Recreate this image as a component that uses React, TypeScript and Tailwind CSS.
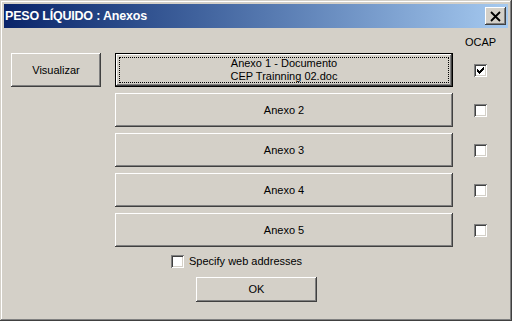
import React from 'react';

const raised =
  'bg-[#d4d0c8] shadow-[inset_-1px_-1px_#404040,inset_1px_1px_#ffffff,inset_-2px_-2px_#808080,inset_2px_2px_#d4d0c8]';
const sunken =
  'bg-white shadow-[inset_1px_1px_#808080,inset_-1px_-1px_#ffffff,inset_2px_2px_#404040,inset_-2px_-2px_#d4d0c8]';

const CheckBox = ({ checked = false }: { checked?: boolean }) => (
  <div className={`relative w-[13px] h-[13px] shrink-0 ${sunken}`}>
    {checked && (
      <svg width="13" height="13" viewBox="0 0 13 13" className="absolute inset-0" shapeRendering="crispEdges">
        <rect x="9" y="3" width="1" height="1" fill="#000" />
        <rect x="8" y="4" width="2" height="1" fill="#000" />
        <rect x="3" y="5" width="1" height="1" fill="#000" />
        <rect x="7" y="5" width="3" height="1" fill="#000" />
        <rect x="3" y="6" width="2" height="1" fill="#000" />
        <rect x="6" y="6" width="3" height="1" fill="#000" />
        <rect x="3" y="7" width="5" height="1" fill="#000" />
        <rect x="4" y="8" width="3" height="1" fill="#000" />
        <rect x="5" y="9" width="1" height="1" fill="#000" />
      </svg>
    )}
  </div>
);

const annexes = ['Anexo 2', 'Anexo 3', 'Anexo 4', 'Anexo 5'];

export default function App() {
  return (
    <div
      className="w-[512px] h-[321px] flex flex-col p-[4px] bg-[#d4d0c8] shadow-[inset_-1px_-1px_#404040,inset_1px_1px_#d4d0c8,inset_-2px_-2px_#808080,inset_2px_2px_#ffffff] text-black text-[11px] leading-[13px]"
      style={{ fontFamily: '"Liberation Sans", Arial, sans-serif' }}
    >
      {/* Title bar */}
      <div className="h-[24px] flex items-center justify-between pl-[1px] pr-[2px] bg-gradient-to-r from-[#0a246a] to-[#a6caf0]">
        <span className="text-white font-bold text-[12.5px] tracking-[-0.2px]">PESO LÍQUIDO : Anexos</span>
        <div className={`w-[21px] h-[18px] flex items-center justify-center ${raised}`}>
          <svg width="11" height="11" viewBox="0 0 11 11">
            <path d="M1 1 L10 10 M10 1 L1 10" stroke="#000" strokeWidth="1.8" />
          </svg>
        </div>
      </div>

      {/* Body */}
      <div className="flex flex-col pt-[8px] pl-[7px]">
        <div className="flex h-[13px]">
          <div className="ml-[463px] w-[13px] flex justify-center">
            <span className="whitespace-nowrap">OCAP</span>
          </div>
        </div>

        <div className="flex flex-col gap-[6px] mt-[4px]">
          <div className="flex items-center h-[34px]">
            <button className={`w-[90px] h-[34px] ${raised}`}>Visualizar</button>
            <button
              className={`relative ml-[14px] w-[338px] h-[34px] border border-black flex flex-col items-center justify-center ${raised}`}
            >
              <span className="absolute inset-[3px] border border-dotted border-black" />
              <span>Anexo 1 - Documento</span>
              <span>CEP Trainning 02.doc</span>
            </button>
            <div className="ml-[21px]">
              <CheckBox checked />
            </div>
          </div>
          {annexes.map((a) => (
            <div key={a} className="flex items-center h-[34px]">
              <button className={`ml-[104px] w-[338px] h-[34px] ${raised}`}>{a}</button>
              <div className="ml-[21px]">
                <CheckBox />
              </div>
            </div>
          ))}
        </div>

        <div className="flex items-center mt-[8px] ml-[160px] h-[13px]">
          <CheckBox />
          <span className="ml-[5px]">Specify web addresses</span>
        </div>

        <button className={`mt-[9px] ml-[185px] w-[121px] h-[25px] ${raised}`}>OK</button>
      </div>
    </div>
  );
}
